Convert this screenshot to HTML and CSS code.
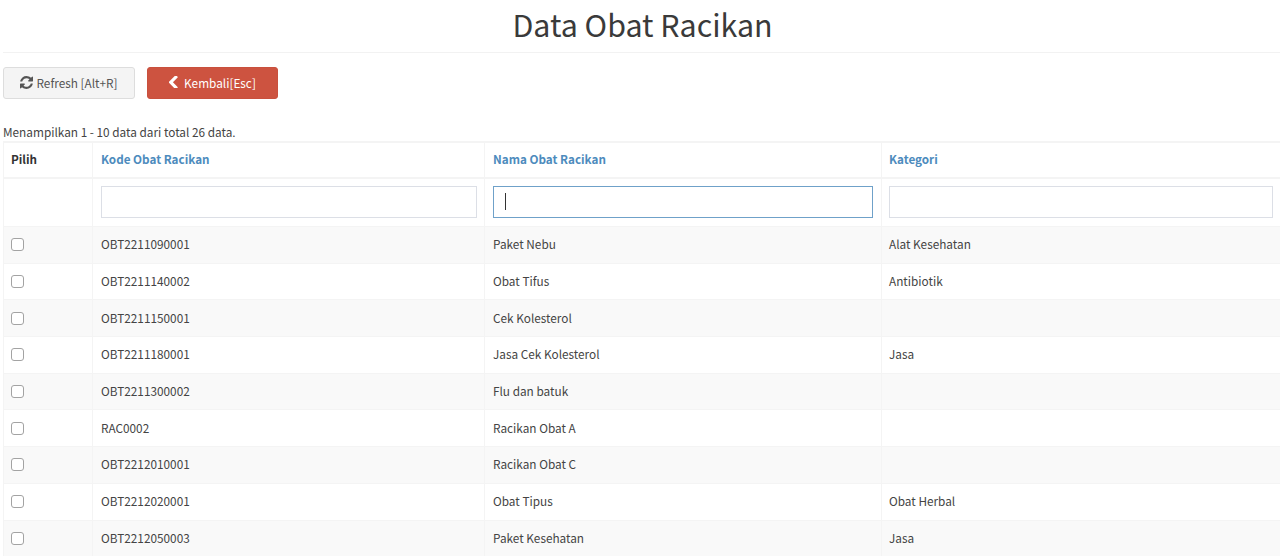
FILE: index.html
```html
<!DOCTYPE html>
<html lang="en">
<head>
    <meta charset="UTF-8">
    <title>Data Obat Racikan</title>
    <link rel="stylesheet" href="styles.css">
</head>
<body>
    <h1 class="title">Data Obat Racikan</h1>
    <div class="toolbar">
        <button class="btn btn-default">
            <svg class="icon" viewBox="0 0 1536 1536" width="13" height="13"><path fill="currentColor" d="M1511 928q0 5-1 7-64 268-268 434.500t-478 166.500q-146 0-282.500-55t-243.500-157l-129 129q-19 19-45 19t-45-19-19-45v-448q0-26 19-45t45-19h448q26 0 45 19t19 45-19 45l-137 137q71 66 161 102t187 36q134 0 250-65t186-179q11-17 53-117 8-23 30-23h192q13 0 22.500 9.500t9.500 22.500zm25-800v448q0 26-19 45t-45 19h-448q-26 0-45-19t-19-45 19-45l138-138q-148-137-349-137-134 0-250 65t-186 179q-11 17-53 117-8 23-30 23h-199q-13 0-22.500-9.500t-9.500-22.500v-7q65-268 270-434.500t480-166.500q146 0 284 55.500t245 156.500l130-129q19-19 45-19t45 19 19 45z"/></svg>
            Refresh [Alt+R]
        </button>
        <button class="btn btn-danger">
            <svg class="icon" viewBox="0 0 1024 1280" width="9" height="12"><path fill="currentColor" d="M979 141l-531 531 531 531q19 19 19 45t-19 45l-166 166q-19 19-45 19t-45-19l-742-742q-19-19-19-45t19-45l742-742q19-19 45-19t45 19l166 166q19 19 19 45t-19 45z"/></svg>
            Kembali[Esc]
        </button>
    </div>
    <p class="summary">Menampilkan 1 - 10 data dari total 26 data.</p>
    <table class="grid">
        <colgroup>
            <col class="col-pilih">
            <col class="col-kode">
            <col class="col-nama">
            <col>
        </colgroup>
        <thead>
            <tr class="head">
                <th>Pilih</th>
                <th><a href="#">Kode Obat Racikan</a></th>
                <th><a href="#">Nama Obat Racikan</a></th>
                <th><a href="#">Kategori</a></th>
            </tr>
            <tr class="filters">
                <td></td>
                <td><input type="text" class="field"></td>
                <td><input type="text" class="field field-focus" value=""><span class="caret"></span></td>
                <td><input type="text" class="field"></td>
            </tr>
        </thead>
        <tbody>
            <tr><td class="pick"><input type="checkbox"></td><td>OBT2211090001</td><td>Paket Nebu</td><td>Alat Kesehatan</td></tr>
            <tr><td class="pick"><input type="checkbox"></td><td>OBT2211140002</td><td>Obat Tifus</td><td>Antibiotik</td></tr>
            <tr><td class="pick"><input type="checkbox"></td><td>OBT2211150001</td><td>Cek Kolesterol</td><td></td></tr>
            <tr><td class="pick"><input type="checkbox"></td><td>OBT2211180001</td><td>Jasa Cek Kolesterol</td><td>Jasa</td></tr>
            <tr><td class="pick"><input type="checkbox"></td><td>OBT2211300002</td><td>Flu dan batuk</td><td></td></tr>
            <tr><td class="pick"><input type="checkbox"></td><td>RAC0002</td><td>Racikan Obat A</td><td></td></tr>
            <tr><td class="pick"><input type="checkbox"></td><td>OBT2212010001</td><td>Racikan Obat C</td><td></td></tr>
            <tr><td class="pick"><input type="checkbox"></td><td>OBT2212020001</td><td>Obat Tipus</td><td>Obat Herbal</td></tr>
            <tr><td class="pick"><input type="checkbox"></td><td>OBT2212050003</td><td>Paket Kesehatan</td><td>Jasa</td></tr>
        </tbody>
    </table>
</body>
</html>
```

FILE: styles.css
```css
* {
    box-sizing: border-box;
}
html, body {
    height: 556px;
    overflow: hidden;
}
body {
    margin: 0;
    padding-left: 3px;
    background: #fff;
    color: #444;
    font-family: "Noto Sans CJK SC", "Source Sans Pro", "Open Sans", sans-serif;
    font-size: 11.8px;
    line-height: 18px;
}
.title {
    margin: 0;
    height: 53px;
    padding-left: 2px;
    border-bottom: 1px solid #f2f2f2;
    font-size: 30.4px;
    font-weight: 400;
    line-height: 49px;
    text-align: center;
    color: #3a3a3a;
}
.toolbar {
    display: flex;
    gap: 12px;
    margin-top: 14px;
}
.btn {
    display: flex;
    align-items: center;
    justify-content: center;
    width: 132px;
    height: 32px;
    padding: 0 0 2px;
    border: 1px solid #ddd;
    border-radius: 3px;
    font-family: inherit;
    font-size: 11.8px;
}
.btn .icon {
    margin-right: 3px;
}
.btn-default {
    background: #f4f4f4;
    color: #555;
}
.btn-danger {
    width: 131px;
    background: #cd5340;
    border-color: #c9503d;
    color: #fff;
}
.btn-danger .icon {
    margin-right: 6px;
}
.summary {
    margin: 24px 0 0;
    height: 18px;
    line-height: 18px;
}
.grid {
    width: 1279px;
    border-collapse: collapse;
    table-layout: fixed;
    border-top: 2px solid #f4f4f4;
}
.col-pilih {
    width: 89px;
}
.col-kode {
    width: 392px;
}
.col-nama {
    width: 397px;
}
.grid th, .grid td {
    padding: 0 8px;
    border: 1px solid #f4f4f4;
    text-align: left;
    vertical-align: middle;
}
.grid td:nth-child(2) {
    padding-right: 7px;
}
.grid th:last-child, .grid td:last-child {
    padding-left: 7px;
}
.grid th {
    height: 36px;
    padding-bottom: 2px;
    border-bottom-width: 2px;
    font-size: 11.7px;
    font-weight: 700;
}
.grid th a {
    color: #4d8bbd;
    text-decoration: none;
}
.grid th:first-child {
    padding-left: 7px;
    color: #333;
}
.filters td {
    height: 48.5px;
    padding-bottom: 2px;
    position: relative;
}
.field {
    display: block;
    width: 100%;
    height: 32px;
    padding: 0 12px;
    border: 1px solid #dcdfe6;
    outline: none;
    background: #fff;
}
.field-focus {
    border-color: #6fa1c9;
}
.caret {
    position: absolute;
    left: 20px;
    top: 14px;
    width: 1px;
    height: 17px;
    background: #333;
}
tbody tr {
    height: 36.7px;
}
tbody tr:nth-child(odd) {
    background: #f9f9f9;
}
.grid tbody td {
    padding-bottom: 1px;
}
.grid tbody td.pick {
    padding-bottom: 0;
}
.pick input {
    display: block;
    width: 13px;
    height: 13px;
    margin: 0 0 0 -1px;
    border: 1.3px solid #a3a3a3;
    border-radius: 3px;
    background: #fff;
    appearance: none;
}
```
